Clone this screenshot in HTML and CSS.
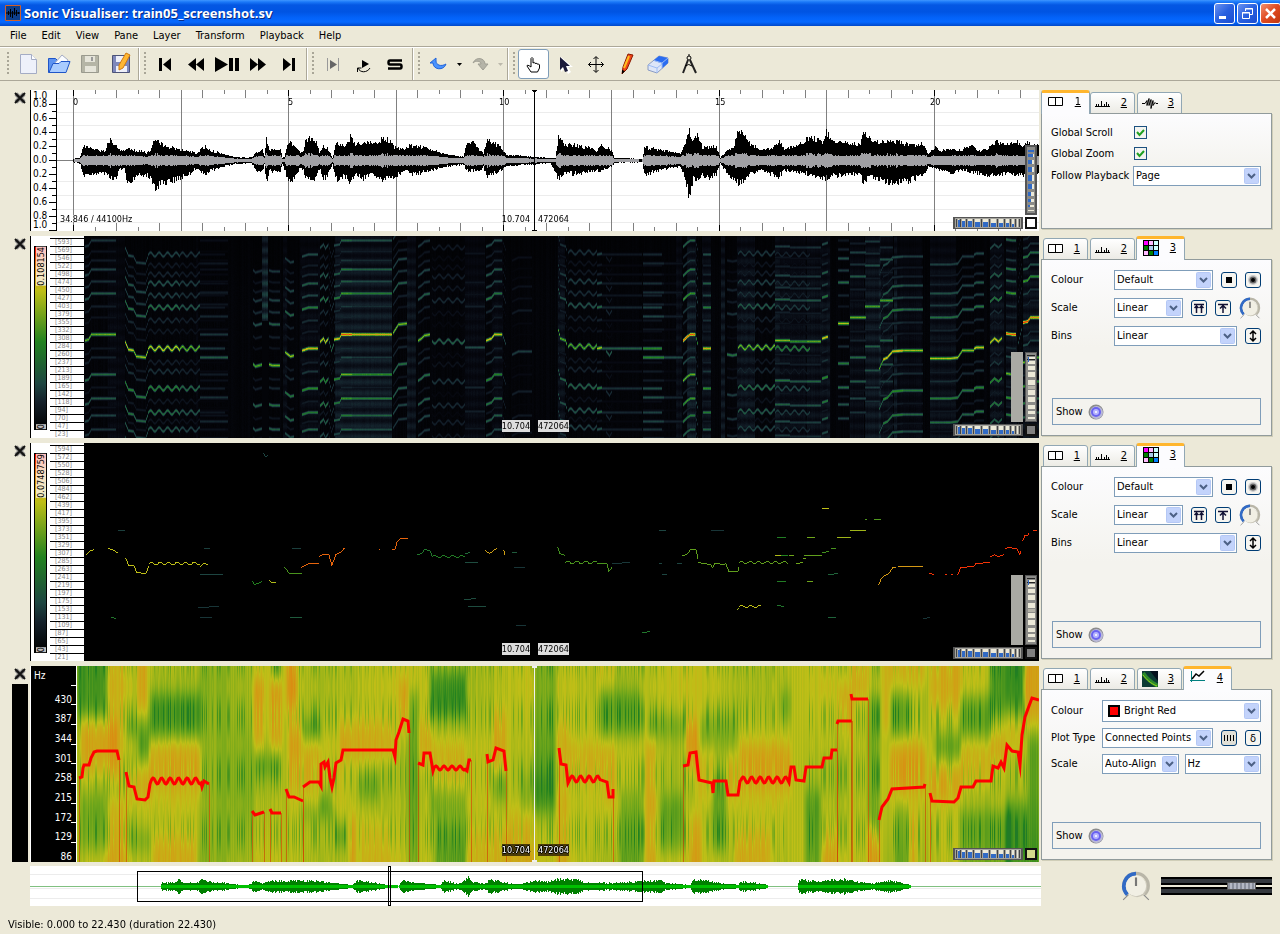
FILE: index.html
```
<!DOCTYPE html>
<html lang="en">
<head>
    <meta charset="utf-8">
    <title>Sonic Visualiser: train05_screenshot.sv</title>
    <meta name="viewport" content="width=device-width, initial-scale=1">
    <link rel="stylesheet" href="styles.css">
</head>
<body>
    <svg class="defs" aria-hidden="true">
        <symbol id="i-pane" viewBox="0 0 16 16"><path d="M.5 3.5h14v8h-14zM7.500 3.500v8" fill="#fff" stroke="#000"/></symbol>
        <symbol id="i-ruler" viewBox="0 0 16 16"><path d="M0 11.500h15M1.500 9v2M3.500 9v2M6.500 6v5M9.500 9v2M11.500 7v4M13.500 9v2" fill="none" stroke="#000"/></symbol>
        <symbol id="i-wave" viewBox="0 0 16 16"><path d="M0 8.500h3l2-3v5l2-7v7l2-6v9l2-8v5l2-3 1 1h2" fill="none" stroke="#000"/></symbol>
        <symbol id="i-grid" viewBox="0 0 16 16">
            <path d="M0 0h16v16H0z"/>
            <path d="M1 1h4v4H1z" fill="#f0f"/><path d="M6 1h4v4H6z" fill="#fbf"/><path d="M11 1h4v4h-4z" fill="#cff"/>
            <path d="M1 6h4v4H1z" fill="#008000"/><path d="M6 6h4v4H6z" fill="#ace"/><path d="M11 6h4v4h-4z" fill="#cff"/>
            <path d="M1 11h4v4H1z" fill="#fbf"/><path d="M6 11h4v4H6z" fill="#008000"/><path d="M11 11h4v4h-4z" fill="#0080ff"/>
        </symbol>
        <symbol id="i-spec" viewBox="0 0 16 16"><path d="M0 0h16v16H0z" fill="#0b3b34"/><path d="M8 0h8v10z" fill="#04101c"/><path d="M1 2c4 6 7 9 15 13" fill="none" stroke="#2a8a2a" stroke-width="4"/><path d="M1 4c4 5 7 8 14 11" fill="none" stroke="#9ad41c" stroke-width="1"/></symbol>
        <symbol id="i-plot" viewBox="0 0 16 16"><path d="M1.500 1v11M0 10.500h15" fill="none" stroke="#008080"/><path d="M2 9l4-5 3 2 5-5" fill="none" stroke="#000" stroke-width="1.500"/></symbol>
        <symbol id="i-close" viewBox="0 0 12 12"><path d="M2 2l8 8M10 2l-8 8" stroke="#808080" stroke-width="4"/><path d="M1 1l10 10M11 1L1 11" stroke="#111" stroke-width="2"/></symbol>
        <symbol id="i-led" viewBox="0 0 16 16"><circle cx="8" cy="8" r="7.500" fill="#8c8c8c"/><circle cx="8.500" cy="8.500" r="6.500" fill="#b9b9d8"/><circle cx="8" cy="8" r="5" fill="#6a63f0"/><circle cx="8" cy="8" r="3" fill="#b6b4ff"/><circle cx="8" cy="8" r="1" fill="#fff"/></symbol>
        <symbol id="i-dial" viewBox="0 0 28 28">
            <path d="M2 27l5-5M26 27l-5-5" stroke="#888"/>
            <path d="M6 22A11.500 11.500 0 1 1 22 22" fill="none" stroke="#b9b6a8" stroke-width="3"/>
            <path d="M6 22A11.500 11.500 0 0 1 14 2.500" fill="none" stroke="#316ac5" stroke-width="3.500"/>
            <circle cx="15" cy="15" r="9.500" fill="#c9c6b8"/><circle cx="14" cy="14" r="9.500" fill="#f1efe4"/>
            <path d="M14 6v8" stroke="#777" stroke-width="2"/>
        </symbol>
        <symbol id="i-hwheel" viewBox="0 0 70 12" preserveAspectRatio="none">
            <path d="M0 0h70v12H0z" fill="#555"/><path d="M2 1h66v10H2z" fill="#a5a49e"/>
            <path d="M5 2h1v8H5zM9 2h3v8H9zM15 2h4v8h-4zM22 2h5v8h-5zM30 2h5v8h-5zM38 2h5v8h-5zM46 2h4v8h-4zM53 2h3v8h-3zM59 2h2v8h-2zM64 2h1v8h-1z" fill="#ece9d8"/>
            <path d="M5 3h2v7H5zM9 4h3v6H9zM15 4h4v6h-4zM22 5h5v5h-5zM30 5h5v5h-5zM38 6h5v4h-5zM46 6h4v4h-4zM53 6h3v4h-3zM59 7h2v3h-2z" fill="#316ac5"/>
            <path d="M3.500 2v8M7.500 2v8M13.500 2v8M20.500 2v8M28.500 2v8M36.500 2v8M44.500 2v8M51.500 2v8M57.500 2v8M62.500 2v8M66.500 2v8" stroke="#444"/>
        </symbol>
        <symbol id="i-vwheel" viewBox="0 0 12 70" preserveAspectRatio="none">
            <path d="M0 0h12v70H0z" fill="#555"/><path d="M1 1h10v68H1z" fill="#8b8b88"/>
            <path d="M3 5h7v2H3zM3 9h7v3H3zM3 14h7v4H3zM3 20h7v5H3zM3 28h7v5H3zM3 38h7v5H3zM3 45h7v5H3zM3 53h7v4H3zM3 59h7v3H3zM3 65h7v2H3z" fill="#ece9d8"/>
            <path d="M3 34h7v3H3z" fill="#b5b3a8"/><path d="M2 3.500h8M2 7.500h8" stroke="#222"/><path d="M3 5h1v5H3z" fill="#316ac5"/>
        </symbol>
        <symbol id="i-vwheelb" viewBox="0 0 12 70" preserveAspectRatio="none">
            <path d="M0 0h12v70H0z" fill="#555"/><path d="M2 2h8v66H2z" fill="#8b8b88"/>
            <path d="M3 5h6v2H3zM3 9h6v3H3zM3 15h6v4H3zM3 22h6v5H3zM3 30h6v6H3zM3 39h6v5H3zM3 47h6v4H3zM3 54h6v3H3zM3 60h6v2H3zM3 65h6v1H3z" fill="#ece9d8"/>
            <path d="M3 5h6v2H3zM3 9h5v3H3zM3 15h4v4H3zM3 22h4v5H3zM3 30h4v6H3zM3 39h4v5H3zM3 47h3v4H3zM3 54h3v3H3zM3 60h2v2H3z" fill="#316ac5"/>
        </symbol>
    </svg>

    <header class="titlebar">
        <svg class="logo" viewBox="0 0 16 16"><path d="M.5.5h15v15H.5z" fill="#0d3f8c" stroke="#d0602a"/><path d="M1 8h14M3.500 6v4M5.500 4v8M7.500 6v7M9.500 3v7M11.500 5v6M13.500 7v2" stroke="#000"/></svg>
        <h1>Sonic Visualiser: train05_screenshot.sv</h1>
        <button class="win" aria-label="Minimise"><svg viewBox="0 0 19 19"><path d="M4 12h7v3H4z" fill="#fff"/></svg></button>
        <button class="win" aria-label="Restore"><svg viewBox="0 0 19 19" fill="none" stroke="#fff"><path d="M7.500 7V4.500h7v6H12M7 5h8M4.500 8.500h7v6h-7zM4 9h8"/></svg></button>
        <button class="win win-close" aria-label="Close"><svg viewBox="0 0 19 19"><path d="M5 5l9 9M14 5l-9 9" stroke="#fff" stroke-width="2.500"/></svg></button>
    </header>

    <nav class="menubar">
        <button>File</button><button>Edit</button><button>View</button><button>Pane</button><button>Layer</button><button>Transform</button><button>Playback</button><button>Help</button>
    </nav>

    <div class="toolbar">
        <div class="group">
            <button class="tool" aria-label="New"><svg viewBox="0 0 24 24"><path d="M4.500 2.500h11l5 5v14h-16z" fill="#eef1fa" stroke="#a4acc4"/><path d="M15.500 2.500v5h5" fill="#fff" stroke="#a4acc4"/></svg></button>
            <button class="tool" aria-label="Open"><svg viewBox="0 0 24 24"><path d="M1.500 6.500h7l2 2h8v12h-17z" fill="#5d93f0" stroke="#1f55c8"/><path d="M7 12l8-9 6 5-2 6z" fill="#fafcff" stroke="#a4acc4"/><path d="M2 20.500l4-9h6l2-2h9l-4 11z" fill="#a9ccff" stroke="#1f55c8"/></svg></button>
            <button class="tool" aria-label="Save"><svg viewBox="0 0 24 24"><path d="M3.500 3.500h17v17h-17z" fill="#b5b5a6" stroke="#9a9a8e"/><path d="M7 4h10v6H7zM7 14h11v6H7z" fill="#e6e5da"/><path d="M13 5h2v4h-2z" fill="#999"/></svg></button>
            <button class="tool" aria-label="Save As"><svg viewBox="0 0 24 24"><path d="M3.500 3.500h17v17h-17z" fill="#7f88bb" stroke="#4c5378"/><path d="M7 4h10v6H7zM7 14h11v6H7z" fill="#eef0fa"/><path d="M17 1l4 2-7 13-4 2v-5z" fill="#ffb732" stroke="#d07a10"/></svg></button>
        </div>
        <div class="group">
            <button class="tool" aria-label="Rewind to Start"><svg viewBox="0 0 24 24"><path d="M6 6h3v13H6zM18 6v13l-8-6.500z"/></svg></button>
            <button class="tool" aria-label="Rewind"><svg viewBox="0 0 24 24"><path d="M12 6v13l-8-6.500zM20 6v13l-8-6.500z"/></svg></button>
            <button class="tool" aria-label="Play / Pause"><svg viewBox="0 0 24 24"><path d="M0 5l13 7.500L0 20zM14 6h4v13h-4zM20 6h4v13h-4z"/></svg></button>
            <button class="tool" aria-label="Fast Forward"><svg viewBox="0 0 24 24"><path d="M4 6v13l8-6.500zM12 6v13l8-6.500z"/></svg></button>
            <button class="tool" aria-label="Fast Forward to End"><svg viewBox="0 0 24 24"><path d="M15 6h3v13h-3zM6 6v13l8-6.500z"/></svg></button>
        </div>
        <div class="group">
            <button class="tool" aria-label="Constrain Playback to Selection"><svg viewBox="0 0 24 24"><path d="M6 6h1v13H6zM17 6h1v13h-1z" fill="#999"/><path d="M9 8v9l7-4.500z" fill="#666"/></svg></button>
            <button class="tool" aria-label="Loop Playback"><svg viewBox="0 0 24 24"><path d="M10 8v8l7-4z"/><path d="M6 16c2 5 9 5 12 0M5.500 20v-4h4" fill="none" stroke="#000"/></svg></button>
            <button class="tool" aria-label="Solo Current Pane"><svg viewBox="0 0 24 24"><path d="M19 8.500H7q-1.500 0-1.500 2t1.500 2h10q1.500 0 1.500 2t-1.500 2H5" fill="none" stroke="#000" stroke-width="2.500"/></svg></button>
        </div>
        <div class="group">
            <button class="tool" aria-label="Undo"><svg viewBox="0 0 24 24"><path d="M3 11l6-5v3c0 4 5 6 10 3-2 7-13 6-13-1z" fill="#4a93ff" stroke="#2164d8"/></svg></button>
            <button class="drop" aria-label="Undo history"><svg viewBox="0 0 5 3"><path d="M0 0h5L2.500 3z"/></svg></button>
            <button class="tool" aria-label="Redo"><svg viewBox="0 0 24 24"><path d="M5 11c3-7 12-5 12 1h3l-5 6-5-6h3c0-3-5-4-8-1z" fill="#b5b4a8" stroke="#a09f94"/></svg></button>
            <button class="drop off" aria-label="Redo history"><svg viewBox="0 0 5 3"><path d="M0 0h5L2.500 3z"/></svg></button>
        </div>
        <div class="group last">
            <button class="tool active" aria-label="Navigate"><svg viewBox="0 0 24 24"><path d="M9 15V6.500q1-2 2 0V11q1.500-1.500 2 .500 1.500-1 2 .500 2-.500 2.500 1V16l-2 4H9l-4-6q0-2 4 1z" fill="#fff" stroke="#000"/></svg></button>
            <button class="tool" aria-label="Select"><svg viewBox="0 0 24 24"><path d="M8 5v15l4-4 3 6 3-2-3-5h5z" fill="#fff"/><path d="M7 5v13l3-3 2 5 3-1-2-5h4z" fill="#1a1a3a"/></svg></button>
            <button class="tool" aria-label="Edit"><svg viewBox="0 0 24 24"><path d="M12 5v15M4.500 12.500h15M9.500 7L12 4.500 14.500 7M9.500 18l2.500 2.500 2.500-2.500M7 10l-2.500 2.500L7 15M17 10l2.500 2.500L17 15" fill="none" stroke="#000"/></svg></button>
            <button class="tool" aria-label="Draw"><svg viewBox="0 0 24 24"><path d="M13 2l5 1-6 14-5 5 1-7z" fill="#f0461a" stroke="#8a1a00"/><path d="M14 4L9 16" stroke="#ffc020" stroke-width="2"/><path d="M7 22v-4l3 1z"/></svg></button>
            <button class="tool" aria-label="Erase"><svg viewBox="0 0 24 24"><path d="M2 13l11-9 9 2v5L11 21l-9-3z" fill="#dde6f8" stroke="#8b9cc4"/><path d="M7.500 8.500L13 4l9 2v5l-6 5.500v-5z" fill="#2a6cf0"/><path d="M8 8.500l8 2.500v5M16 11l6-5M2 13l9 3v5M11 16l5-4" fill="none" stroke="#9dbcf4"/></svg></button>
            <button class="tool" aria-label="Measure"><svg viewBox="0 0 24 24"><circle cx="12" cy="6" r="2" fill="none" stroke="#000"/><path d="M11 8L6 21M13 8l6 13" fill="none" stroke="#222" stroke-width="2"/><path d="M8 14q4-3 7 0" fill="none" stroke="#000"/><path d="M12 2v2" stroke="#000"/></svg></button>
        </div>
    </div>

    <main>
        <section class="row">
            <div class="side"><button class="x" aria-label="Close pane"><svg><use href="#i-close"/></svg></button></div>
            <div class="pane">
                <ol class="wave-scale">
                    <li>1.0</li><li>0.8</li><li>0.6</li><li>0.4</li><li>0.2</li><li>0.0</li><li>0.2</li><li>0.4</li><li>0.6</li><li>0.8</li><li>1.0</li>
                </ol>
                <div class="plot">
                    <canvas id="waveform" width="982" height="141"></canvas>
                    <div class="times" id="times"></div>
                    <span class="info">34.846 / 44100Hz</span>
                </div>
                <p class="readout"><span>10.704</span><span>472064</span></p>
                <div class="wheels"><svg class="vwheel"><use href="#i-vwheelb"/></svg><svg class="hwheel"><use href="#i-hwheel"/></svg><i class="reset"></i></div>
            </div>
            <div class="props">
                <div class="tabs" role="tablist">
                    <button role="tab" class="sel"><svg><use href="#i-pane"/></svg><u>1</u></button>
                    <button role="tab"><svg><use href="#i-ruler"/></svg><u>2</u></button>
                    <button role="tab"><svg><use href="#i-wave"/></svg><u>3</u></button>
                </div>
                <form class="sheet wide">
                    <div class="line check"><label for="scroll">Global Scroll</label><input type="checkbox" id="scroll" checked></div>
                    <div class="line check"><label for="zoom">Global Zoom</label><input type="checkbox" id="zoom" checked></div>
                    <div class="line"><label for="follow">Follow Playback</label><select id="follow"><option>Page</option></select></div>
                </form>
            </div>
        </section>

        <section class="row">
            <div class="side"><button class="x" aria-label="Close pane"><svg><use href="#i-close"/></svg></button></div>
            <div class="pane">
                <div class="key"><div class="ramp"><span>0</span><span>0.108154</span></div></div>
                <ol class="bins" id="bins-a"></ol>
                <div class="plot"><canvas id="spectrogram" width="955" height="202"></canvas></div>
                <p class="readout boxed"><span>10.704</span><span>472064</span></p>
                <div class="wheels"><i class="gain"></i><svg class="vwheel"><use href="#i-vwheel"/></svg><svg class="hwheel"><use href="#i-hwheel"/></svg><i class="reset grey"></i></div>
            </div>
            <div class="props">
                <div class="tabs" role="tablist">
                    <button role="tab"><svg><use href="#i-pane"/></svg><u>1</u></button>
                    <button role="tab"><svg><use href="#i-ruler"/></svg><u>2</u></button>
                    <button role="tab" class="sel"><svg><use href="#i-grid"/></svg><u>3</u></button>
                </div>
                <form class="sheet">
                    <div class="line"><label for="colour-a">Colour</label><select id="colour-a"><option>Default</option></select>
                        <button type="button" class="sq" aria-label="Normalize columns"><svg viewBox="0 0 14 14"><path d="M4 4h6v6H4z"/></svg></button>
                        <button type="button" class="sq" aria-label="Smooth"><svg viewBox="0 0 14 14"><circle cx="7" cy="7" r="5" fill="#ccc"/><circle cx="7" cy="7" r="3.500" fill="#666"/><circle cx="7" cy="7" r="2"/></svg></button></div>
                    <div class="line"><label for="scale-a">Scale</label><select id="scale-a"><option>Linear</option></select>
                        <button type="button" class="sq" aria-label="Normalize Visible Area"><svg viewBox="0 0 14 14"><path d="M2 3.500h10M4.500 4v8M9.500 4v8M2.500 7l2-2 2 2M7.500 7l2-2 2 2" fill="none" stroke="#113" stroke-width="1.500"/></svg></button>
                        <button type="button" class="sq" aria-label="Normalize"><svg viewBox="0 0 14 14"><path d="M2 3.500h10M7 4v8M4 7.500l3-3 3 3" fill="none" stroke="#113" stroke-width="1.500"/></svg></button>
                        <svg class="dial"><use href="#i-dial"/></svg></div>
                    <div class="line"><label for="bins-s">Bins</label><select id="bins-s"><option>Linear</option></select>
                        <button type="button" class="sq" aria-label="Invert"><svg viewBox="0 0 14 14"><path d="M7 2v10M4 5l3-3 3 3M4 9l3 3 3-3" fill="none" stroke="#000" stroke-width="1.500"/></svg></button></div>
                    <div class="show">Show <svg><use href="#i-led"/></svg></div>
                </form>
            </div>
        </section>

        <section class="row">
            <div class="side"><button class="x" aria-label="Close pane"><svg><use href="#i-close"/></svg></button></div>
            <div class="pane">
                <div class="key"><div class="ramp"><span>0</span><span>0.0748759</span></div></div>
                <ol class="bins" id="bins-b"></ol>
                <div class="plot"><canvas id="peaks" width="955" height="218"></canvas></div>
                <p class="readout boxed"><span>10.704</span><span>472064</span></p>
                <div class="wheels"><i class="gain"></i><svg class="vwheel"><use href="#i-vwheel"/></svg><svg class="hwheel"><use href="#i-hwheel"/></svg><i class="reset grey"></i></div>
            </div>
            <div class="props">
                <div class="tabs" role="tablist">
                    <button role="tab"><svg><use href="#i-pane"/></svg><u>1</u></button>
                    <button role="tab"><svg><use href="#i-ruler"/></svg><u>2</u></button>
                    <button role="tab" class="sel"><svg><use href="#i-grid"/></svg><u>3</u></button>
                </div>
                <form class="sheet">
                    <div class="line"><label for="colour-b">Colour</label><select id="colour-b"><option>Default</option></select>
                        <button type="button" class="sq" aria-label="Normalize columns"><svg viewBox="0 0 14 14"><path d="M4 4h6v6H4z"/></svg></button>
                        <button type="button" class="sq" aria-label="Smooth"><svg viewBox="0 0 14 14"><circle cx="7" cy="7" r="5" fill="#ccc"/><circle cx="7" cy="7" r="3.500" fill="#666"/><circle cx="7" cy="7" r="2"/></svg></button></div>
                    <div class="line"><label for="scale-b">Scale</label><select id="scale-b"><option>Linear</option></select>
                        <button type="button" class="sq" aria-label="Normalize Visible Area"><svg viewBox="0 0 14 14"><path d="M2 3.500h10M4.500 4v8M9.500 4v8M2.500 7l2-2 2 2M7.500 7l2-2 2 2" fill="none" stroke="#113" stroke-width="1.500"/></svg></button>
                        <button type="button" class="sq" aria-label="Normalize"><svg viewBox="0 0 14 14"><path d="M2 3.500h10M7 4v8M4 7.500l3-3 3 3" fill="none" stroke="#113" stroke-width="1.500"/></svg></button>
                        <svg class="dial"><use href="#i-dial"/></svg></div>
                    <div class="line"><label for="bins-t">Bins</label><select id="bins-t"><option>Linear</option></select>
                        <button type="button" class="sq" aria-label="Invert"><svg viewBox="0 0 14 14"><path d="M7 2v10M4 5l3-3 3 3M4 9l3 3 3-3" fill="none" stroke="#000" stroke-width="1.500"/></svg></button></div>
                    <div class="show">Show <svg><use href="#i-led"/></svg></div>
                </form>
            </div>
        </section>

        <section class="row">
            <div class="side"><button class="x" aria-label="Close pane"><svg><use href="#i-close"/></svg></button><div class="current"></div></div>
            <div class="pane dark">
                <div class="hz-scale">
                    <span class="unit">Hz</span>
                    <ol><li></li><li>430</li><li>387</li><li>344</li><li>301</li><li>258</li><li>215</li><li>172</li><li>129</li><li>86</li></ol>
                </div>
                <div class="plot"><canvas id="pitch" width="962" height="196"></canvas></div>
                <p class="readout inverse"><span>10.704</span><span>472064</span></p>
                <div class="wheels"><svg class="hwheel"><use href="#i-hwheel"/></svg><i class="reset lime"></i></div>
            </div>
            <div class="props">
                <div class="tabs" role="tablist">
                    <button role="tab"><svg><use href="#i-pane"/></svg><u>1</u></button>
                    <button role="tab"><svg><use href="#i-ruler"/></svg><u>2</u></button>
                    <button role="tab"><svg><use href="#i-spec"/></svg><u>3</u></button>
                    <button role="tab" class="sel"><svg><use href="#i-plot"/></svg><u>4</u></button>
                </div>
                <form class="sheet tight">
                    <div class="line tall"><label for="colour-c">Colour</label><span class="swatched"><select id="colour-c"><option>Bright Red</option></select></span></div>
                    <div class="line"><label for="plot">Plot Type</label><select id="plot"><option>Connected Points</option></select>
                        <button type="button" class="sq on" aria-label="Draw segment division lines"><svg viewBox="0 0 14 14"><path d="M2.500 4v6M5.500 4v6M8.500 4v6M11.500 4v6" stroke="#000"/></svg></button>
                        <button type="button" class="sq" aria-label="Show derivative">δ</button></div>
                    <div class="line pair"><label for="scale-c">Scale</label><select id="scale-c"><option>Auto-Align</option></select><select aria-label="Unit"><option>Hz</option></select></div>
                    <div class="show">Show <svg><use href="#i-led"/></svg></div>
                </form>
            </div>
        </section>
    </main>

    <div class="bottom">
        <canvas id="overview" width="1011" height="40"></canvas>
        <div class="output">
            <svg class="speed"><use href="#i-dial"/></svg>
            <input type="range" class="fader" min="0" max="100" value="80" aria-label="Playback level">
        </div>
    </div>
    <footer>Visible: 0.000 to 22.430 (duration 22.430)</footer>
    <script src="app.js"></script>
</body>
</html>
```
FILE: styles.css
```
*, *::before {
    box-sizing: border-box;
}

body {
    margin: 0;
    min-height: 100vh;
    display: flex;
    flex-direction: column;
    background: #ece9d8;
    color: #000;
    font: 11px/14px "DejaVu Sans Condensed", "DejaVu Sans", sans-serif;
}

button, select, input {
    font: inherit;
    color: inherit;
    margin: 0;
}

button {
    padding: 0;
    border: 0;
    background: none;
}

ol, p, h1 {
    margin: 0;
    padding: 0;
    list-style: none;
}

svg, canvas {
    display: block;
}

.defs {
    position: absolute;
    width: 0;
    height: 0;
}

/* title bar */
.titlebar {
    height: 26px;
    display: flex;
    align-items: center;
    gap: 2px;
    padding-left: 5px;
    background: linear-gradient(#3f96ff 0, #1a78f8 2px, #0457e3 5px, #0054e3 12px, #0363fa 18px, #0568ff 22px, #0148c8 26px);
}

.logo {
    width: 16px;
    height: 16px;
}

.titlebar h1 {
    flex: 1;
    padding-left: 1px;
    color: #fff;
    font: bold 13px/16px "Noto Sans", sans-serif;
    text-shadow: 1px 1px #0a2a80;
}

.win {
    width: 21px;
    height: 21px;
    border: 1px solid #fff;
    border-radius: 3px;
    background: linear-gradient(135deg, #6a92f0, #2860e0 50%, #1a4cd0);
}

.win-close {
    margin-right: -1px;
    background: linear-gradient(135deg, #f09070, #e04a20 50%, #c03810);
}

/* menu and tools */
.menubar {
    height: 21px;
    display: flex;
    padding-left: 3px;
    border-bottom: 1px solid #aca899;
}

.menubar button {
    padding: 0 8px 0 7px;
}

.toolbar {
    height: 34px;
    display: flex;
    padding-left: 3px;
    border-top: 1px solid #fff;
    border-bottom: 1px solid #aca899;
}

.group {
    display: flex;
    align-items: center;
    padding: 0 2px 0 4px;
    border-right: 1px solid #aca899;
    border-left: 1px solid #fff;
}

.group:first-child {
    border-left: 0;
}

.group::before {
    content: "";
    width: 2px;
    height: 24px;
    margin-right: 3px;
    background: repeating-linear-gradient(#a9a697 0 2px, transparent 2px 4px);
}

.group.last {
    border-right: 0;
}

.tool {
    width: 31px;
    height: 30px;
    display: grid;
    place-items: center;
}

.tool svg {
    width: 24px;
    height: 24px;
}

.tool.active {
    border: 1px solid #7f9db9;
    border-radius: 3px;
    background: #fff;
}

.drop {
    width: 10px;
}

.drop svg {
    width: 5px;
    height: 3px;
    margin: auto;
}

.off {
    opacity: .2;
}

/* panes */
main {
    flex: 1;
    display: grid;
    grid-template-rows: minmax(0, 141fr) minmax(0, 202fr) minmax(0, 218fr) minmax(0, 196fr);
    row-gap: 5px;
    padding: 9px 8px 0 0;
}

.row {
    display: flex;
    min-height: 0;
}

.side {
    width: 30px;
    display: flex;
    flex-direction: column;
    gap: 4px;
    padding: 2px 2px 0 12px;
}

.x svg {
    width: 12px;
    height: 12px;
    margin: 0 2px;
}

.current {
    flex: 1;
    background: #000;
}

.pane {
    position: relative;
    flex: 1;
    min-width: 0;
    display: flex;
    border-left: 1px solid #000;
    background: #fff;
}

.pane.dark {
    border-color: #fff;
    background: #000;
    color: #fff;
}

.plot {
    position: relative;
    flex: 1;
    min-width: 0;
}

.plot canvas {
    position: absolute;
    width: 100%;
    height: 100%;
    image-rendering: pixelated;
}

.wave-scale {
    width: 26px;
    display: flex;
    flex-direction: column;
    border-right: 1px solid #000;
    font-size: 10px;
    line-height: 14px;
    background:
        repeating-linear-gradient(transparent 0 13px, #000 13px 14px) 100% 1px / 7px 140px no-repeat,
        repeating-linear-gradient(transparent 0 13px, #000 13px 14px) 100% 8px / 4px 130px no-repeat;
}

.wave-scale li {
    height: 14px;
    padding-left: 2px;
}

.wave-scale li:first-child,
.wave-scale li:last-child {
    height: 7px;
    line-height: 11px;
}

.wave-scale li:last-child {
    line-height: 3px;
}

.times span {
    position: absolute;
    top: 6px;
    margin-left: 1px;
    font-size: 9px;
    line-height: 12px;
}

.info {
    position: absolute;
    left: 3px;
    bottom: 6px;
    font-size: 9px;
    line-height: 12px;
    text-shadow: 0 0 1px #fff, 1px 0 #fff, -1px 0 #fff;
}

.key {
    width: 19px;
    display: flex;
    padding: 10px 3px 8px;
}

.ramp {
    flex: 1;
    display: flex;
    flex-direction: column-reverse;
    justify-content: space-between;
    align-items: center;
    border: 1px solid #000;
    background: linear-gradient(red, #e08010 10%, #bfbf17 24%, #22821f 52%, #1d4541 75%, #14202a 85%, #000);
    font-size: 9px;
    line-height: 10px;
}

.ramp span {
    writing-mode: vertical-rl;
    transform: rotate(180deg);
    background: rgba(255, 255, 255, .75);
}

.bins {
    width: 34px;
    display: flex;
    flex-direction: column;
    padding-top: 2px;
    color: #888;
    font-size: 7px;
    line-height: 7px;
}

.bins li {
    flex: 1;
    min-height: 0;
    padding-left: 5px;
    border-top: 1px solid #000;
    overflow: hidden;
}

.hz-scale {
    width: 46px;
    padding-right: 1px;
    display: flex;
    flex-direction: column;
    border-right: 1px solid #fff;
    font-size: 10px;
    line-height: 12px;
}

.unit {
    height: 8px;
    padding: 4px 0 0 3px;
}

.hz-scale ol {
    flex: 1;
    display: flex;
    flex-direction: column;
    text-align: right;
}

.hz-scale li {
    flex: 1;
    position: relative;
    padding-right: 3px;
}

.hz-scale li::after {
    content: "";
    position: absolute;
    right: -1px;
    bottom: 8px;
    width: 5px;
    height: 1px;
    background: #fff;
}

.hz-scale li:last-child {
    flex: none;
    height: 11px;
}

.hz-scale li:last-child::after {
    content: none;
}

.readout {
    position: absolute;
    left: 46.700%;
    bottom: 6px;
    display: flex;
    gap: 8px;
    font-size: 9px;
    line-height: 12px;
}

.boxed span {
    background: #ddd;
}

.inverse span {
    background: #4a3b08;
    text-shadow: 1px 0 #000, -1px 0 #000, 0 1px #000, 0 -1px #000;
}

.wheels {
    position: absolute;
    right: 2px;
    bottom: 2px;
    width: 84px;
    display: grid;
    grid-template-columns: 1fr 12px 12px;
    gap: 2px;
}

.gain {
    grid-column: 2;
    background: #aaaaa4;
}

.vwheel {
    grid-column: 3;
    width: 12px;
    height: 70px;
}

.hwheel {
    grid-column: 1 / 3;
    width: 70px;
    height: 12px;
}

.reset {
    border: 2px solid #111;
    background: #fff;
}

.reset.grey {
    background: #808080;
}

.reset.lime {
    background: #d3dc8c;
}

/* property boxes */
.props {
    width: 231px;
    margin-left: 2px;
    display: flex;
    flex-direction: column;
    padding-bottom: 2px;
}

.tabs {
    height: 24px;
    display: flex;
    align-items: flex-end;
    padding-left: 2px;
    margin-bottom: -1px;
}

.tabs button {
    width: 45px;
    height: 22px;
    margin-right: 2px;
    display: flex;
    align-items: center;
    justify-content: space-between;
    padding: 0 7px 0 4px;
    border: 1px solid #91a7b4;
    border-radius: 3px 3px 0 0;
    background: linear-gradient(#fff, #ecebe5);
}

.tabs svg {
    width: 16px;
    height: 16px;
}

.tabs .sel {
    z-index: 1;
    width: 49px;
    height: 24px;
    margin: 0 0 0 -1px;
    padding: 0 8px 4px 6px;
    border-top: 3px solid #ffb62e;
    border-bottom: 0;
    background: #fcfcfe;
}

.tabs .sel:first-child {
    margin-left: -2px;
}

.sheet {
    flex: 1;
    display: flex;
    flex-direction: column;
    gap: 8px;
    padding: 10px 10px 10px 9px;
    border: 1px solid #919b9c;
    box-shadow: 1px 1px #d0ceb8;
    background: linear-gradient(#fcfcfe, #f4f3ee 50%);
}

.sheet.wide {
    gap: 4px;
}

.sheet.tight {
    gap: 6px;
}

.line {
    height: 20px;
    display: flex;
    align-items: center;
    gap: 8px;
}

.line.check {
    height: 17px;
}

.line.tall {
    height: 22px;
}

.line label {
    width: 63px;
    margin-right: -8px;
    white-space: nowrap;
}

.wide label {
    width: 82px;
}

.tight label {
    width: 51px;
}

select {
    flex: 1;
    min-width: 0;
    width: 100%;
    height: 20px;
    padding: 0 18px 0 2px;
    border: 1px solid #7f9db9;
    border-radius: 0;
    appearance: none;
    background: #fff url("data:image/svg+xml,%3Csvg xmlns='http://www.w3.org/2000/svg' width='15' height='16'%3E%3Crect x='.5' y='.5' width='14' height='15' rx='1' fill='%23c3d3fb' stroke='%23b5c8f5'/%3E%3Cpath d='M4 6l3.500 3.500L11 6' fill='none' stroke='%234d6185' stroke-width='2'/%3E%3C/svg%3E") right 1px center no-repeat;
}

.pair select:last-child {
    margin-left: -2px;
}

.swatched {
    position: relative;
    flex: 1;
}

.swatched select {
    display: block;
    height: 22px;
    padding-left: 21px;
}

.swatched::before {
    content: "";
    position: absolute;
    left: 6px;
    top: 5px;
    width: 12px;
    height: 12px;
    border: 2px solid #000;
    background: red;
}

input[type=checkbox] {
    width: 13px;
    height: 13px;
    margin-left: 1px;
    border: 1px solid #1c5180;
    appearance: none;
    background: #f4f4f0;
}

input[type=checkbox]:checked {
    background: #f4f4f0 url("data:image/svg+xml,%3Csvg xmlns='http://www.w3.org/2000/svg' width='11' height='11'%3E%3Cpath d='M2 5l2.500 3L9 3' fill='none' stroke='%2321a121' stroke-width='2'/%3E%3C/svg%3E") center no-repeat;
}

.sq {
    width: 16px;
    height: 16px;
    flex: none;
    border: 1px solid #003c74;
    border-radius: 3px;
    background: #f6f5f0;
    line-height: 13px;
}

.sq.on {
    background: #e0dfd6;
}

.sq svg {
    width: 14px;
    height: 14px;
}

.dial {
    flex: none;
    width: 22px;
    height: 22px;
}

.show {
    height: 27px;
    margin: auto 0 0 1px;
    display: flex;
    align-items: center;
    gap: 5px;
    padding-left: 3px;
    border: 1px solid #7f9db9;
}

.show svg {
    width: 16px;
    height: 16px;
}

/* overview strip and output controls */
.bottom {
    display: flex;
    margin-top: 4px;
    padding: 0 8px 0 30px;
}

#overview {
    flex: 1;
    min-width: 0;
    height: 40px;
}

.output {
    width: 231px;
    display: flex;
    align-items: center;
    justify-content: flex-end;
    gap: 10px;
}

.speed {
    width: 30px;
    height: 30px;
}

.fader {
    width: 111px;
    height: 18px;
    appearance: none;
    background: linear-gradient(#000 0 2px, #34383e 2px 6px, #000 6px 8px, #ece9d8 8px 10px, #000 10px 12px, #34383e 12px 16px, #000 16px);
}

.fader::-webkit-slider-thumb {
    appearance: none;
    width: 29px;
    height: 8px;
    background: repeating-linear-gradient(90deg, #8a8f9c 0 2px, #b4b8c4 2px 4px);
    border: 1px solid #555;
}

footer {
    height: 28px;
    padding: 12px 8px 0;
}
```
FILE: app.js
```
// small repeatable noise source
var seed = 7;
function rnd() {
    seed = (seed * 1103515245 + 12345) % 2147483648;
    return seed / 2147483648;
}

// "Default" colour map, 0..1
var stops = [
    [0, 0, 0, 0], [.08, 6, 8, 16], [.18, 18, 30, 40], [.3, 29, 69, 65], [.4, 32, 106, 56],
    [.5, 34, 130, 31], [.6, 111, 166, 27], [.7, 191, 191, 23], [.78, 208, 160, 21],
    [.86, 224, 128, 16], [.95, 240, 64, 8], [1, 255, 0, 0]
];
function colour(v) {
    v = Math.max(0, Math.min(1, v));
    for (var i = 1; i < stops.length; i++) {
        if (v <= stops[i][0]) {
            var a = stops[i - 1], b = stops[i], t = (v - a[0]) / (b[0] - a[0]);
            return [a[1] + t * (b[1] - a[1]), a[2] + t * (b[2] - a[2]), a[3] + t * (b[3] - a[3])];
        }
    }
}

// all data below is in window coordinates, so shift each canvas by its origin
function open(id, x, y) {
    var ctx = document.getElementById(id).getContext('2d');
    ctx.translate(-x, -y);
    return ctx;
}

// value of a flat [x, y, x, y...] line at x
function at(pts, x) {
    for (var i = 2; i < pts.length; i += 2) {
        if (x <= pts[i]) {
            var w = pts[i] - pts[i - 2];
            return w ? pts[i - 1] + (pts[i + 1] - pts[i - 1]) * (x - pts[i - 2]) / w : pts[i + 1];
        }
    }
    return pts[pts.length - 1];
}

function wave(x0, x1, y, amp, period) {
    var pts = [];
    for (var x = x0; x <= x1; x++) {
        pts.push(x, y + amp * Math.sin((x - x0) / period * Math.PI * 2));
    }
    return pts;
}

/* waveform */
var up = [73,1,79,2,82,10,84,13,90,11,100,9,105,9,107,15,111,20,113,13,117,13,119,10,124,8,126,11,131,11,138,8,142,9,146,6,150,10,153,16,155,18,160,16,165,13,180,10,190,8,196,6,202,11,206,13,210,9,218,7,225,5,235,3,248,2,252,3,256,8,262,9,264,4,266,20,269,9,280,11,282,2,284,3,286,11,289,18,295,13,300,7,303,8,305,20,310,20,316,18,319,7,323,14,327,11,332,2,336,17,341,14,346,14,350,22,355,15,372,16,379,17,382,21,388,19,394,12,405,10,410,14,418,13,425,12,440,7,463,3,466,14,472,17,480,9,483,6,487,20,500,12,506,5,520,4,550,2,555,2,558,21,565,14,575,14,590,11,597,8,600,14,612,9,614,2,642,1,644,12,660,10,680,6,684,14,689,28,693,18,697,25,702,12,716,13,720,2,725,8,733,12,738,27,745,24,750,15,760,10,770,10,778,18,784,11,795,12,800,16,808,20,815,20,822,17,826,26,835,17,850,16,860,14,862,26,870,20,880,16,890,18,900,17,910,14,922,15,928,6,935,12,940,9,950,10,960,9,970,14,980,8,987,10,995,18,1005,14,1015,18,1022,12,1027,16,1039,14];
var down = [73,1,80,3,82,12,84,15,90,14,105,12,107,15,111,18,117,16,119,8,124,8,126,19,131,20,138,14,142,17,146,14,150,18,155,26,160,24,170,21,180,17,190,12,196,8,206,14,210,10,225,5,235,3,248,2,252,3,256,10,262,11,264,4,266,21,269,10,280,12,282,2,286,15,289,22,295,17,300,7,303,10,305,16,316,18,319,8,323,18,327,15,332,3,336,19,346,16,350,21,355,14,363,17,372,13,382,20,394,16,405,9,410,14,425,11,440,7,463,3,466,10,480,9,483,6,487,15,500,10,506,5,550,2,558,18,565,12,575,13,590,11,600,10,612,5,614,2,642,1,644,14,660,9,680,5,684,15,689,39,693,18,697,20,702,14,710,18,716,13,720,2,725,10,733,18,738,24,745,20,750,13,760,9,778,16,784,9,808,13,826,18,835,15,860,12,862,22,870,16,890,22,910,20,922,14,928,6,950,12,960,9,987,14,995,15,1005,12,1027,15,1039,12];

var c = open('waveform', 57, 90);
c.fillStyle = '#ececec';
[98, 112, 125, 139, 181, 195, 209, 222].forEach(function (y) { c.fillRect(57, y, 982, 1); });
for (var i = 0; i < 45; i++) {
    var tx = Math.round(73 + i * 21.52), full = i % 5 == 0;
    c.fillStyle = '#808080';
    if (full) {
        c.fillRect(tx, 90, 1, 141);
    } else {
        var len = i % 2 ? 4 : 8;
        c.fillRect(tx, 90, 1, len);
        c.fillRect(tx, 231 - len, 1, len);
    }
    if (i % 10 == 0) {
        c.fillStyle = '#000';
        c.fillRect(tx, 90, 1, 6);
        c.fillRect(tx, 225, 1, 6);
        var s = document.createElement('span');
        s.textContent = i / 2;
        s.style.left = ((tx - 57 - (i > 10 ? 5 : 1)) / 9.82) + '%';
        document.getElementById('times').appendChild(s);
    }
}
c.fillStyle = '#808080';
c.fillRect(57, 160, 18, 1);
for (var x = 73; x < 1039; x++) {
    var u = at(up, x) * (.9 + rnd() * .3), d = at(down, x) * (.8 + rnd() * .35);
    c.fillStyle = '#000';
    c.fillRect(x, Math.round(160 - u), 1, Math.round(u + d) + 1);
    var m = Math.round(Math.min(u * .45, 4 + (u > 20 ? 2 : 0) + rnd()));
    c.fillStyle = '#a0a0a4';
    if (m > 0) c.fillRect(x, 160 - m, 1, 2 * m + 1);
}
c.fillStyle = '#000';
c.fillRect(534, 90, 1, 141);
c.fillRect(532, 90, 5, 1);
c.fillRect(533, 91, 3, 1);
c.fillRect(532, 230, 5, 1);

/* bin labels */
function bins(id, list) {
    document.getElementById(id).innerHTML = list.map(function (n) { return '<li>[' + n + ']</li>'; }).join('');
}
bins('bins-a', [593, 569, 546, 522, 498, 474, 450, 427, 403, 379, 355, 332, 308, 284, 260, 237, 213, 189, 165, 142, 118, 94, 70, 47, 23]);
bins('bins-b', [594, 572, 550, 528, 506, 484, 462, 439, 417, 395, 373, 351, 329, 307, 285, 263, 241, 219, 197, 175, 153, 131, 109, 87, 65, 43, 21]);

/* spectrogram: notes as [level, points], each with its partials */
var notes = [
    [.58, [85, 340, 88, 339, 91, 334, 116, 334]],
    [.72, [125, 342, 128, 349, 133, 350]], [.64, [133, 350, 136, 356, 145, 357, 148, 349]],
    [.7, wave(148, 180, 348, -2, 8.5)], [.58, wave(180, 200, 348, -2, 8.5)],
    [.24, [200, 348, 225, 348]], [.34, [200, 357, 228, 357]], [.24, [200, 334, 228, 334]],
    [.54, [253, 364, 255, 366, 262, 364]], [.6, [269, 364, 272, 365, 280, 365]],
    [.64, [285, 352, 290, 356, 294, 355]], [.75, [302, 350, 308, 348, 318, 348]],
    [.74, [320, 341, 323, 338, 325, 342, 328, 338]], [.38, [328, 338, 331, 350, 334, 342]],
    [.74, [334, 339, 339, 338, 341, 334]], [.9, [341, 334, 352, 334]], [.76, [352, 334, 392, 334]],
    [.6, [393, 332, 398, 324, 407, 323]], [.6, [418, 340, 421, 338, 424, 335, 430, 334]],
    [.36, wave(432, 465, 341, 2, 9)], [.3, [465, 347, 485, 347]],
    [.72, [486, 340, 491, 338, 494, 334, 502, 334]], [.3, [502, 334, 506, 346]], [.26, [512, 354, 518, 351, 532, 351]],
    [.56, [558, 330, 560, 338, 565, 340, 567, 346]], [.56, wave(568, 597, 346, -2, 9)],
    [.66, [597, 348, 602, 347]], [.34, [602, 348, 642, 348]], [.34, [606, 351, 609, 355, 612, 350]],
    [.48, [643, 348, 662, 348]], [.48, [643, 357, 664, 357]], [.3, [664, 357, 683, 357]],
    [.9, [683, 340, 687, 336, 690, 334, 695, 334]], [.5, [695, 334, 698, 347]], [.76, [703, 348, 711, 348]],
    [.4, [727, 354, 732, 355, 737, 354]], [.6, wave(738, 775, 347, -2, 8.5)], [.45, wave(775, 810, 348, -2, 8.5)],
    [.62, [775, 340, 790, 340]], [.5, [790, 341, 807, 341]], [.56, [807, 341, 821, 341]],
    [.74, [822, 338, 828, 336]], [.66, [838, 323, 849, 323]], [.58, [850, 317, 866, 317]],
    [.54, [865, 306, 880, 306]], [.54, [880, 300, 893, 300]],
    [.55, [879, 368, 883, 359]], [.76, [883, 359, 887, 357, 892, 351, 903, 350]], [.64, [903, 350, 923, 350]],
    [.68, [930, 358, 950, 358, 958, 357]], [.62, [958, 356, 962, 350, 974, 350]],
    [.72, [974, 348, 976, 347, 984, 347]], [.75, [990, 342, 994, 338, 998, 341, 1002, 337]],
    [.9, [1006, 333, 1012, 334, 1016, 334]], [.3, [1018, 342, 1022, 325]], [.92, [1023, 322, 1027, 321, 1030, 317]], [.82, [1030, 317, 1039, 317]]
];
var partials = [[0, 1.04], [-94, .42], [-83, .22], [-74, .28], [-65, .48], [-53, .4], [-41, .6], [-28, .3], [-17, .22], [14, .25], [23, .34], [40, .68], [53, .22], [64, .6], [73, .2], [81, .5], [95, .42]];
var bands = [[108, 125, .05, 438], [118, 121, .05, 438], [196, 198, .04, 438], [262, 268, .24, 318], [283, 287, .08, 438], [300, 320, .06, 438],
    [335, 392, .15, 438], [407, 416, .12, 438], [465, 485, .06, 438], [492, 503, .06, 438], [558, 565, .1, 438], [676, 682, .08, 438],
    [687, 696, .15, 438], [702, 711, .1, 438], [721, 725, .14, 438], [737, 755, .12, 438], [775, 780, .12, 438], [775, 806, .07, 438],
    [807, 822, .09, 438], [822, 830, .1, 438], [850, 864, .07, 438], [865, 880, .13, 438], [879, 881, .18, 438], [881, 893, .1, 438],
    [894, 897, .14, 438], [897, 922, .05, 438], [930, 956, .09, 438], [990, 1004, .1, 438], [1006, 1017, .1, 438], [1023, 1039, .1, 438]];

c = open('spectrogram', 84, 236);
var W = 955, H = 202, buf = new Float32Array(W * H);
for (x = 0; x < W; x++) {
    var col = rnd() * .025, b = 0;
    bands.forEach(function (r) {
        if (x + 84 >= r[0] && x + 84 < r[1]) b = Math.max(b, r[2]);
    });
    for (var y = 0; y < H; y++) {
        var v = .02 + col + b * (.7 + .3 * Math.sin(y / 1.75)) + rnd() * .015;
        if (x + 84 >= 262 && x + 84 < 268 && y > 84) v = .04;
        buf[y * W + x] = v * (.6 + .4 * Math.min(1, y / 60));
    }
}
notes.forEach(function (n) {
    var p = n[1];
    for (var x = p[0]; x < p[p.length - 2]; x++) {
        partials.forEach(function (h) {
            var cy = at(p, x) + h[0] - 236, level = n[0] * h[1] * (.94 + rnd() * .08);
            for (var y = Math.max(0, Math.floor(cy - 4)); y < Math.min(H, cy + 5); y++) {
                var e = level * Math.exp(-Math.pow(y - cy, 2) / 3.2), k = y * W + x - 84;
                if (e > buf[k]) buf[k] = e;
            }
        });
    }
});
function paint(ctx, buf, w, h) {
    var img = ctx.createImageData(w, h);
    for (var i = 0; i < w * h; i++) {
        var rgb = colour(buf[i]);
        img.data[i * 4] = rgb[0];
        img.data[i * 4 + 1] = rgb[1];
        img.data[i * 4 + 2] = rgb[2];
        img.data[i * 4 + 3] = 255;
    }
    ctx.putImageData(img, 0, 0);
}
paint(c, buf, W, H);

/* peak frequencies */
var peaks = [
    [.7, [86, 554, 90, 550, 94, 549]], [.7, [108, 548, 114, 550, 118, 553]], [.7, [125, 558, 128, 565, 133, 565, 136, 572, 145, 573, 149, 563]],
    [.7, wave(149, 200, 563, -1.5, 8.5)], [.7, [200, 566, 203, 563, 208, 564]],
    [.28, [118, 530, 125, 530]], [.28, [204, 548, 210, 548]], [.3, [200, 574, 223, 574]], [.25, [198, 607, 219, 606]], [.25, [200, 617, 212, 617]],
    [.3, [263, 453, 265, 456, 268, 455]], [.45, [111, 617, 116, 618]], [.5, [252, 581, 254, 584, 262, 581]], [.68, [269, 580, 271, 582, 276, 582]],
    [.55, [284, 567, 289, 573, 302, 573]], [.28, [292, 548, 301, 548]], [.36, [290, 617, 302, 617]],
    [.9, [301, 567, 308, 563, 319, 563]], [.9, [319, 556, 322, 554, 328, 554, 331, 565, 335, 554, 341, 551, 343, 548, 345, 548]],
    [.9, [379, 549, 380, 549]], [.9, [392, 549, 394, 549, 396, 542, 400, 538, 408, 538]],
    [.45, [417, 554, 421, 553, 424, 549, 429, 550, 432, 557]], [.48, wave(432, 465, 556, -1, 9)], [.4, [465, 553, 470, 552]], [.32, [465, 562, 478, 562]],
    [.32, [464, 599, 476, 598]], [.32, [468, 606, 486, 606]], [.78, [485, 550, 489, 553, 493, 550, 497, 547]], [.78, [503, 550, 505, 558]],
    [.36, [512, 552, 517, 552]], [.25, [514, 567, 525, 567]], [.25, [516, 625, 526, 625]],
    [.54, [557, 547, 559, 553, 565, 555]], [.55, wave(565, 597, 562, -1.5, 9)], [.55, [597, 563, 606, 563, 608, 571, 612, 566]], [.26, [612, 563, 630, 562]],
    [.3, [659, 530, 666, 530]], [.25, [711, 530, 724, 530]], [.3, [659, 563, 662, 563]], [.3, [677, 563, 682, 563]], [.3, [662, 574, 667, 574]],
    [.45, [642, 632, 650, 631]], [.58, [682, 555, 686, 554, 690, 549, 695, 549, 698, 562]], [.58, [698, 562, 710, 564, 712, 567, 714, 563, 725, 564]],
    [.58, [725, 563, 728, 571, 737, 571, 739, 563]], [.58, wave(739, 788, 562, -1, 8.5)], [.6, [796, 563, 803, 562]],
    [.66, [737, 609, 739, 607]], [.7, wave(739, 761, 606, -1, 9)], [.45, [777, 605, 784, 606]],
    [.48, [777, 537, 786, 537]], [.68, [775, 555, 781, 555]], [.5, [781, 555, 788, 555]], [.6, [789, 555, 794, 555]], [.48, [777, 581, 786, 581]],
    [.6, [807, 537, 815, 537]], [.58, [804, 555, 822, 555]], [.6, [807, 581, 813, 581]], [.6, [803, 558, 806, 558]], [.7, [822, 508, 829, 508]],
    [.54, [822, 552, 829, 551]], [.55, [831, 548, 836, 548]], [.38, [828, 574, 838, 573]], [.38, [828, 617, 836, 617]],
    [.66, [837, 537, 851, 537]], [.66, [850, 530, 866, 530]], [.56, [865, 519, 867, 519]], [.56, [874, 519, 881, 519]],
    [.8, [878, 584, 880, 579, 884, 575, 888, 573, 892, 567, 896, 567]], [.8, [898, 566, 923, 566]],
    [.96, [929, 573, 934, 574]], [.96, [945, 574, 947, 574]], [.96, [951, 574, 953, 574]], [.96, [957, 574, 960, 567, 973, 566, 975, 563, 990, 562]],
    [.96, [990, 556, 994, 554, 998, 556, 1004, 554]], [.96, [1005, 548, 1008, 547, 1016, 548, 1019, 554, 1021, 547]], [.96, [1022, 540, 1024, 535, 1027, 535, 1029, 530]], [.96, [1033, 530, 1037, 530]],
    [.25, [923, 618, 930, 617]]
];
c = open('peaks', 84, 443);
c.fillStyle = '#000';
c.fillRect(84, 443, 955, 218);
peaks.forEach(function (n) {
    var rgb = colour(n[0]).map(Math.round), p = n[1], last = null;
    c.fillStyle = 'rgb(' + rgb + ')';
    for (var x = p[0]; x < p[p.length - 2]; x++) {
        var y = Math.round(at(p, x));
        var top = last === null ? y : Math.min(y, last + (y > last ? 1 : -1));
        c.fillRect(x, y == last ? y : top, 1, last === null ? 1 : Math.max(1, Math.abs(y - last)));
        last = y;
    }
});

/* pitch track over a decibel-scaled spectrogram: [x0, x1, y0, y1, change] */
var patches = [
    [77, 106, 640, 716, -.15], [81, 118, 720, 775, .1], [108, 125, 640, 780, .04], [138, 146, 640, 710, .09], [81, 108, 795, 850, -.08], [106, 125, 800, 880, .07],
    [127, 150, 720, 735, -.1], [150, 200, 693, 737, -.13], [138, 148, 735, 758, -.13], [150, 200, 743, 790, .08], [127, 150, 770, 800, .08], [153, 195, 835, 880, .09],
    [130, 150, 830, 850, -.08], [200, 252, 640, 880, -.05], [253, 263, 680, 745, .09], [270, 281, 680, 745, .1], [255, 280, 755, 775, -.1], [272, 280, 640, 678, -.12],
    [286, 296, 640, 712, .13], [288, 300, 720, 790, .09], [303, 320, 720, 737, -.13], [303, 320, 745, 790, .07], [300, 335, 805, 820, -.08], [335, 345, 825, 845, -.12],
    [320, 330, 793, 810, -.12], [340, 392, 720, 760, .08], [358, 378, 773, 800, -.09], [350, 355, 815, 880, .12], [360, 390, 820, 880, .05], [400, 408, 680, 730, .09],
    [408, 418, 690, 880, -.09], [418, 432, 720, 765, .07], [430, 465, 672, 717, -.15], [432, 465, 745, 780, .06], [430, 465, 792, 815, -.09], [435, 465, 820, 880, -.1],
    [466, 510, 830, 880, .07], [493, 506, 710, 770, .08], [493, 506, 772, 800, -.1], [510, 535, 810, 880, .07], [535, 555, 640, 810, -.09], [520, 553, 775, 815, -.05],
    [556, 568, 720, 880, .07], [568, 604, 745, 780, .06], [600, 640, 690, 735, -.1], [620, 642, 790, 880, -.09], [597, 613, 640, 690, .05], [604, 614, 745, 800, .06],
    [646, 655, 740, 880, .08], [648, 685, 715, 737, -.09], [660, 683, 795, 850, -.1], [686, 697, 720, 770, .12], [697, 713, 745, 800, .06], [700, 736, 715, 750, -.07],
    [712, 725, 775, 850, -.1], [727, 738, 758, 795, .08], [740, 790, 745, 790, .09], [735, 770, 830, 880, .09], [690, 700, 815, 880, .08], [780, 790, 690, 720, -.08],
    [805, 820, 790, 880, -.11], [823, 837, 830, 880, .07], [838, 851, 690, 730, .08], [852, 868, 640, 700, .06], [868, 880, 695, 825, -.08], [868, 878, 830, 880, .12],
    [883, 890, 640, 730, .08], [890, 925, 640, 685, .08], [890, 910, 695, 735, -.1], [890, 925, 745, 790, .1], [895, 908, 805, 880, -.08], [910, 915, 815, 880, .09],
    [930, 960, 640, 710, .07], [935, 960, 735, 757, -.12], [930, 960, 765, 800, .1], [960, 990, 695, 735, -.12], [960, 990, 745, 785, .08], [990, 1023, 640, 715, -.15],
    [960, 1010, 810, 880, -.1], [990, 1005, 735, 765, .08], [1006, 1020, 705, 745, .06], [1006, 1039, 800, 880, -.13], [1024, 1039, 640, 720, .12], [1028, 1039, 735, 800, -.12]
];
var tracks = [
    [79, 778, 82, 777, 83, 768, 84, 765, 89, 765, 91, 758, 94, 752, 97, 751, 117, 751, 119, 760],
    [126, 772, 129, 786, 134, 787, 137, 799, 145, 800, 148, 797, 150, 784].concat(wave(151, 201, 781, -3, 8.5), [202, 787, 204, 781, 209, 784]),
    [252, 811, 255, 815, 264, 812], [270, 809, 272, 813, 281, 813], [286, 789, 289, 797, 294, 797, 303, 801],
    [303, 787, 310, 782, 319, 782, 321, 786, 321, 764, 324, 762, 325, 767, 328, 762, 330, 778, 332, 787, 334, 778, 336, 763, 341, 760, 343, 750, 393, 750, 395, 757, 396, 740, 399, 732, 403, 719, 408, 721, 409, 733],
    [418, 763, 423, 765, 424, 753, 430, 753, 433, 771].concat(wave(434, 465, 768, -2, 8), [467, 771, 469, 760, 471, 760]),
    [487, 754, 488, 762, 493, 760, 496, 748, 504, 751, 506, 771],
    [559, 748, 561, 764, 566, 765, 568, 783].concat(wave(570, 600, 779, -3, 8.5), [607, 782, 609, 797, 613, 797, 613, 789]),
    [683, 766, 688, 765, 690, 753, 696, 752, 699, 780, 712, 783, 713, 793, 714, 781, 726, 781, 728, 795, 738, 795, 740, 781].concat(wave(741, 789, 780, -3, 8.5), [791, 767, 794, 767, 796, 780, 804, 781, 806, 767, 822, 767, 824, 758, 831, 758, 832, 750, 837, 750]),
    [837, 724, 838, 721, 852, 721], [851, 694, 852, 699, 868, 699], [879, 820, 882, 807, 888, 799, 892, 789, 924, 787, 925, 784],
    [930, 793, 932, 801, 954, 802, 958, 798, 961, 787, 973, 787, 976, 781, 991, 781, 993, 766, 998, 768, 1001, 762, 1004, 768, 1007, 745, 1012, 751, 1018, 752, 1020, 765, 1022, 735, 1025, 717, 1029, 706, 1032, 698, 1039, 700]
];
c = open('pitch', 77, 666);
W = 962;
H = 196;
buf = new Float32Array(W * H);
for (x = 0; x < W; x++) {
    var fast = (rnd() - .5) * .04, dark = rnd() < .25 ? -.05 : 0, px = x + 77;
    for (y = 0; y < H; y++) {
        var py = y + 666, sum = .685 + fast + .02 * Math.sin(px / 23) * Math.cos(py / 31);
        sum += dark * (1 + Math.sin(py / 9.3)) * .8;
        for (i = 0; i < patches.length; i++) {
            var q = patches[i];
            if (px > q[0] - 3 && px < q[1] + 3) {
                var ex = Math.min(1, (px - q[0] + 3) / 5, (q[1] + 3 - px) / 5);
                var ey = 1 / (1 + Math.exp((q[2] - py) / 6)) / (1 + Math.exp((py - q[3]) / 6));
                sum += q[4] * ex * ey;
            }
        }
        buf[y * W + x] = Math.max(.47, Math.min(.84, sum));
    }
}
paint(c, buf, W, H);
tracks.forEach(function (p) {
    c.fillStyle = 'rgba(210, 60, 0, .6)';
    c.fillRect(p[0], p[1], 1, 862 - p[1]);
    c.fillRect(p[p.length - 2], p[p.length - 1], 1, 862 - p[p.length - 1]);
    c.strokeStyle = '#f00';
    c.lineWidth = 3;
    c.beginPath();
    for (var i = 0; i < p.length; i += 2) c.lineTo(p[i], p[i + 1]);
    c.stroke();
});
c.fillStyle = '#f0f0f0';
c.fillRect(534, 666, 1, 196);
c.fillRect(532, 666, 5, 2);
c.fillRect(532, 860, 5, 2);

/* overview */
var env = [160, 0, 162, 3, 168, 3, 176, 3, 178, 6, 184, 3, 198, 3, 200, 6, 213, 3, 224, 3, 240, 1, 248, 1, 256, 5, 262, 2, 267, 5, 276, 5, 286, 4, 290, 5, 316, 5, 330, 3, 352, 1, 356, 5, 374, 3, 386, 1, 394, 1, 398, 0, 402, 5, 416, 3, 428, 2, 440, 1, 444, 5, 458, 2, 463, 4, 467, 9, 472, 4, 484, 2, 491, 6, 502, 4, 512, 2, 522, 2, 534, 5, 548, 4, 556, 6, 578, 6, 584, 3, 600, 3, 620, 3, 632, 4, 660, 5, 664, 3, 676, 2, 690, 1, 692, 5, 706, 6, 716, 3, 738, 1, 740, 4, 756, 3, 766, 1, 768, 0, 797, 0, 799, 6, 822, 4, 826, 5, 844, 6, 858, 4, 874, 2, 876, 3, 892, 5, 900, 3, 910, 1, 911, 0];
c = open('overview', 30, 866);
c.fillStyle = '#fff';
c.fillRect(30, 866, 1011, 40);
c.fillStyle = '#ececec';
c.fillRect(30, 874, 1011, 1);
c.fillRect(30, 888, 1011, 1);
c.fillRect(30, 898, 1011, 1);
c.fillStyle = '#80c080';
c.fillRect(30, 886, 1011, 1);
for (x = 160; x < 911; x++) {
    var e = at(env, x);
    if (e <= 0) continue;
    var t = Math.round(e * (.8 + rnd() * .5));
    c.fillStyle = '#008000';
    c.fillRect(x, 886 - t, 1, 2 * t + 1);
    c.fillStyle = '#00c000';
    c.fillRect(x, 885, 1, 3);
}
c.strokeStyle = '#000';
c.strokeRect(137.5, 871.5, 505, 30);
c.strokeRect(388.5, 866.5, 2, 39);
```
